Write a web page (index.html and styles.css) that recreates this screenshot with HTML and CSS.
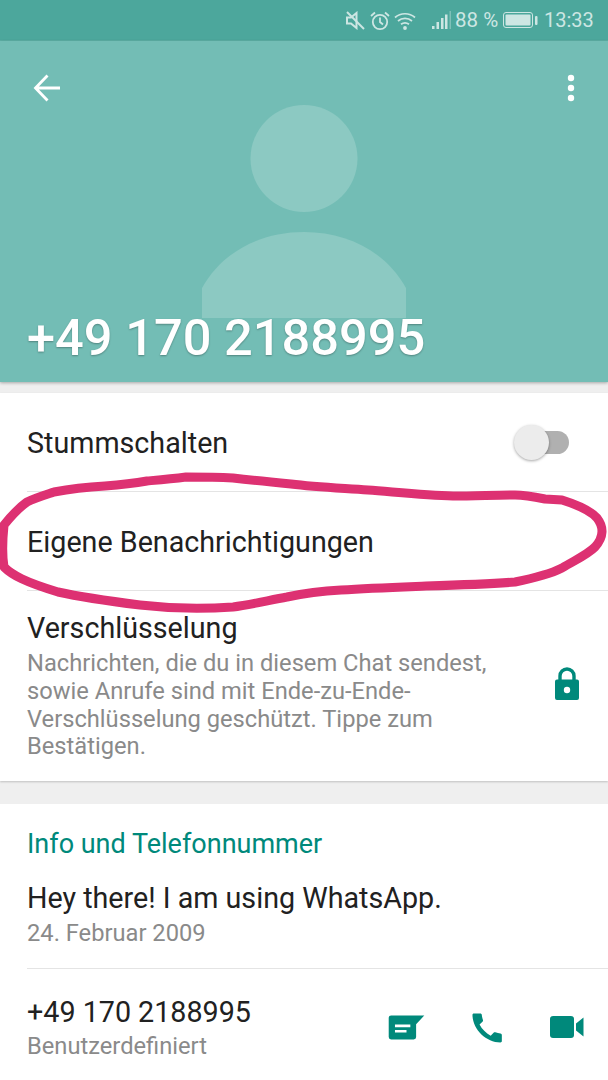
FILE: index.html
```html
<!DOCTYPE html>
<html lang="de">
<head>
<meta charset="utf-8">
<title>Kontaktinfo</title>
<link rel="stylesheet" href="styles.css">
</head>
<body>
<div class="screen">
  <div class="status">
    <svg class="st-mute" width="19" height="19" viewBox="0 0 19 19"><path d="M1 6.500h4L10.500 2v15L5 12.500H1z" fill="none" stroke="#cde6e3" stroke-width="2"/><path d="M1 1l17 17" stroke="#cde6e3" stroke-width="2"/></svg>
    <svg class="st-alarm" width="20" height="20" viewBox="0 0 20 20"><circle cx="10" cy="11" r="7.200" fill="none" stroke="#cde6e3" stroke-width="1.800"/><path d="M10 6.500V11l3 2.500M1 5l4-3.500M19 5l-4-3.500" fill="none" stroke="#cde6e3" stroke-width="1.800"/></svg>
    <svg class="st-wifi" width="22" height="20" viewBox="0 0 22 20"><path d="M1 6.500C6.500 1.500 15.500 1.500 21 6.500M4 10C8 6.500 14 6.500 18 10M7 13.300c2.400-1.800 5.600-1.800 8 0" fill="none" stroke="#cde6e3" stroke-width="1.700"/><circle cx="11" cy="17" r="1.900" fill="#cde6e3"/></svg>
    <svg class="st-signal" width="20" height="19" viewBox="0 0 20 19"><path d="M0 15h2.500v3H0zM4.500 11H7v7H4.500zM9 7h2.500v11H9zM13 3.500h2.500V18H13z" fill="#cde6e3"/><path d="M17.500 0H19v18h-1.500z" fill="#cde6e3" opacity=".4"/></svg>
    <span class="st-text st-pct">88 %</span>
    <svg class="st-batt" width="36" height="17" viewBox="0 0 36 17"><rect x=".5" y=".5" width="29" height="15" rx="2.500" fill="none" stroke="#cde6e3" stroke-width="1"/><rect x="2.500" y="2.500" width="25" height="11" rx="1" fill="#cde6e3"/><rect x="32" y="4" width="2.500" height="9" rx="1" fill="#cde6e3"/></svg>
    <span class="st-text st-time">13:33</span>
  </div>
  <header class="hero">
    <svg class="avatar" width="204" height="213" viewBox="0 0 204 213"><circle cx="102" cy="53.500" r="53.500" fill="#8cc9c2"/><path d="M0 183C20 147 58 127 102 127s82 20 102 56v30H0z" fill="#8cc9c2"/></svg>
    <div class="toolbar">
      <svg width="28" height="28" viewBox="0 0 28 28"><path d="M27 14H3M14.500 1.500L2.500 14l12 12.500" fill="none" stroke="#fff" stroke-width="2.800"/></svg>
      <svg width="8" height="28" viewBox="0 0 8 28"><circle cx="4" cy="4" r="3.200" fill="#fff"/><circle cx="4" cy="14" r="3.200" fill="#fff"/><circle cx="4" cy="24" r="3.200" fill="#fff"/></svg>
    </div>
    <h1 class="hero-title">+49 170 2188995</h1>
  </header>
  <section class="card card-first">
    <div class="row row-mute">
      <span class="row-title">Stummschalten</span>
      <span class="switch"><span class="switch-thumb"></span></span>
    </div>
    <div class="row row-notify">
      <span class="row-title">Eigene Benachrichtigungen</span>
    </div>
    <div class="row row-enc">
      <div class="enc-text">
        <div class="row-title">Verschlüsselung</div>
        <p class="row-sub">Nachrichten, die du in diesem Chat sendest, sowie Anrufe sind mit Ende-zu-Ende-Verschlüsselung geschützt. Tippe zum Bestätigen.</p>
      </div>
      <svg class="lock" width="26" height="34" viewBox="0 0 26 34"><path d="M6 14V9a7 7 0 0 1 14 0v5" fill="none" stroke="#00897b" stroke-width="3.400"/><path d="M3 12.500h20a2 2 0 0 1 2 2V31a2 2 0 0 1-2 2H3a2 2 0 0 1-2-2V14.500a2 2 0 0 1 2-2z" fill="#00897b"/><circle cx="13" cy="23" r="3.200" fill="#fff"/></svg>
    </div>
  </section>
  <section class="card card-info">
    <h2 class="section-title">Info und Telefonnummer</h2>
    <div class="info-about">
      <div class="row-title">Hey there! I am using WhatsApp.</div>
      <div class="row-sub">24. Februar 2009</div>
    </div>
    <div class="info-phone">
      <div class="phone-text">
        <div class="row-title">+49 170 2188995</div>
        <div class="row-sub">Benutzerdefiniert</div>
      </div>
      <div class="actions">
        <svg width="37" height="25" viewBox="0 0 38 26"><path d="M3 0.500H37.500L29 9.500V23a2.500 2.500 0 0 1-2.500 2.500H3A2.500 2.500 0 0 1 .5 23V3A2.500 2.500 0 0 1 3 .5z" fill="#00897b"/><path d="M7 10h16v2.800H7zM7 15.500h12v2.800H7z" fill="#fff"/></svg>
        <svg width="31" height="31" viewBox="0 0 32 32"><path d="M2 1.500h6.500c1 0 1.500.6 1.600 1.400.2 2 .6 3.800 1.200 5.300.2.700 0 1.300-.5 1.800l-3 3c2.600 5 6.500 8.700 11.500 11.400l3-3c.5-.5 1.200-.6 1.800-.4 1.700.6 3.500 1 5.300 1.200.8.100 1.400.7 1.400 1.600V30c0 1-.6 1.500-1.500 1.500C14.500 31.500.5 17.500.5 3 .5 2.100 1 1.500 2 1.500z" fill="#00897b"/></svg>
        <svg width="34" height="22" viewBox="0 0 34 22"><rect x="0" y="0" width="24" height="22" rx="3" fill="#00897b"/><path d="M26 7.500L33.500 1.500v19L26 14.500z" fill="#00897b"/></svg>
      </div>
    </div>
  </section>
  <svg class="scribble" width="608" height="150" viewBox="0 470 608 150"><path d="M4 525C2 545 2 555 4 567C12 575 25 582 58 592C85 598 116 602 140 605C174 609 205 609 233 607C250 605 270 600 287 597C305 593 320 591 341 590C370 588 400 587 426 586C460 585 490 584 515 582C535 578 550 574 562 568C575 560 587 555 595 547C604 537 604 527 597 518C590 510 578 505 562 500L545 499C535 497 525 495 515 495C495 495 475 496 453 496C425 495 395 492 368 490C340 488 315 487 291 484C270 482 250 480 233 478C215 477 200 477 186 477C170 479 158 480 147 481C130 484 118 485 105 486C88 487 70 489 54 492C45 495 35 498 27 502C20 507 12 515 4 525Z" fill="none" stroke="#dd3172" stroke-width="9" stroke-linejoin="round"/></svg>
</div>
</body>
</html>
```
FILE: styles.css
```css
* { box-sizing: border-box; }
html, body { margin: 0; padding: 0; }
body { font-family: Roboto, "Noto Sans", sans-serif; background: #efefef; color: #212121; }
.screen { position: relative; width: 608px; height: 1080px; overflow: hidden; background: #efefef; }

.status { height: 41px; background: #4ca79c; display: flex; align-items: center; padding-left: 346px; color: #cde6e3; box-shadow: inset 0 -1px 0 #5db0a6; }
.status svg { flex: none; display: block; }
.st-alarm { margin-left: 5px; }
.st-wifi { margin-left: 4px; }
.st-signal { margin-left: 16px; }
.st-text { font-size: 20.500px; line-height: 41px; white-space: nowrap; }
.st-pct { margin-left: 3px; width: 45px; }
.st-batt { margin-left: 3px; }
.st-time { margin-left: 5px; font-size: 20px; }

.hero { position: relative; height: 341px; background: #73bdb5; display: flex; flex-direction: column; justify-content: space-between; box-shadow: 0 1px 3px rgba(0,0,0,.3); z-index: 1; }
.avatar { position: absolute; left: 202px; top: 64px; }
.toolbar { position: relative; display: flex; justify-content: space-between; align-items: center; padding: 33px 33px 0 33px; }
.toolbar svg { display: block; }
.hero-title { position: relative; margin: 0; padding: 0 0 17px 27px; font-size: 50.600px; line-height: 54px; font-weight: 500; color: #fff; text-shadow: 0 1px 2px rgba(0,0,0,.3); white-space: nowrap; }

.card { background: #fff; }
.card-first { margin-top: 11px; box-shadow: 0 1px 2px rgba(0,0,0,.2); }
.row { display: flex; align-items: center; justify-content: space-between; margin-left: 27px; border-bottom: 1px solid #e4e4e4; }
.row-mute { height: 99px; padding-right: 39px; }
.row-notify { height: 99px; }
.row-mute .row-title, .row-notify .row-title { padding-top: 2px; }
.row-enc { height: 190px; border-bottom: 0; padding: 0 28px 0 0; align-items: flex-start; }
.row-title { font-size: 28.700px; line-height: 36px; color: #212121; white-space: nowrap; }
.row-sub { margin: 0; font-size: 23.700px; line-height: 27.800px; color: #8a8a8a; }
.enc-text { width: 480px; padding-top: 19px; }
.enc-text .row-sub { padding-top: 4px; }
.lock { margin-top: 76px; flex: none; }

.switch { position: relative; display: block; width: 29px; height: 23px; border-radius: 0 12px 12px 0; background: #b0b0b0; }
.switch-thumb { position: absolute; left: -26px; top: -6px; width: 35px; height: 35px; border-radius: 50%; background: #ececec; box-shadow: 0 1px 3px rgba(0,0,0,.35); }

.card-info { margin-top: 23px; height: 276px; padding-left: 27px; }
.section-title { margin: 0; padding-top: 23px; font-size: 27px; line-height: 34px; font-weight: 400; color: #00897b; }
.info-about { padding-top: 19px; height: 108px; border-bottom: 1px solid #e4e4e4; }
.info-about .row-sub { padding-top: 4px; }
.info-phone { display: flex; justify-content: space-between; align-items: center; padding-right: 24px; padding-top: 25px; }
.phone-text .row-sub { padding-top: 3px; }
.actions { display: flex; align-items: center; gap: 47px; }
.actions svg { display: block; }

.scribble { position: absolute; left: 0; top: 470px; pointer-events: none; }
```
